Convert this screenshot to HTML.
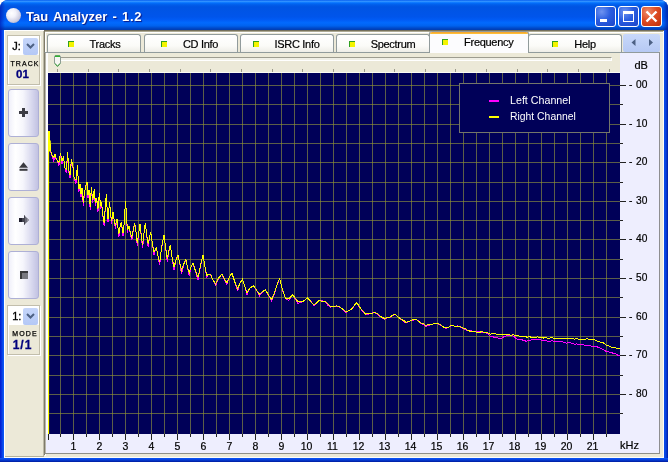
<!DOCTYPE html>
<html><head><meta charset="utf-8"><title>Tau Analyzer - 1.2</title>
<style>
html,body{margin:0;padding:0}
body{width:668px;height:462px;position:relative;overflow:hidden;background:#fff;font-family:"Liberation Sans",sans-serif;font-size:11px;color:#000}
div,span,i{box-sizing:border-box}
.abs,.tk,.lb,.tab,.stk,.btn,.grp{position:absolute}
#frame{will-change:transform;position:absolute;left:0;top:0;width:668px;height:462px;background:#0054e3;border-radius:8px 8px 0 0;overflow:hidden}
#title{position:absolute;left:0;top:0;width:668px;height:30px;background:linear-gradient(to bottom,#0058ee 0%,#3593ff 4%,#288eff 6%,#127dff 8%,#036ffc 10%,#0262ee 14%,#0057e5 20%,#0054e3 24%,#0055eb 56%,#005bf5 66%,#026afe 76%,#0062ef 86%,#0052d6 91%,#0046c4 95%,#003cb0 100%)}
#bl{position:absolute;left:0;top:30px;width:4px;height:432px;background:linear-gradient(to right,#001ad0,#0530dc 35%,#0a50f0 75%,#0c5cf8)}
#br{position:absolute;left:664px;top:30px;width:4px;height:432px;background:linear-gradient(to right,#0a4ce8,#0844e0 40%,#0230c4 75%,#001a9c)}
#bb{position:absolute;left:0;top:458px;width:668px;height:4px;background:linear-gradient(to bottom,#0c58f4,#0a48e8 30%,#0230c0 70%,#001a9c)}
#ttext{position:absolute;left:26px;top:9px;color:#fff;font-weight:bold;font-size:13px;line-height:16px;letter-spacing:0.05px;word-spacing:1.4px;text-shadow:1px 1px 1px #0a1883;white-space:nowrap}
#ticon{position:absolute;left:6.3px;top:7.7px;width:15px;height:15px;border-radius:50%;background:radial-gradient(circle at 38% 35%,#ffffff 0%,#f2f2fa 30%,#cfcfe2 62%,#9494b4 100%)}
.cb{position:absolute;top:6px;width:21px;height:21px;border:1px solid #fff;border-radius:3px;background:radial-gradient(circle at 30% 25%,#6e93f0 0%,#2a5de0 45%,#1a45c8 100%)}
.cb.x{background:radial-gradient(circle at 30% 25%,#ee8c6c 0%,#de4c24 45%,#bd2e0a 100%)}
#client{position:absolute;left:4px;top:30px;width:660px;height:428px;background:#ece9d8}
.tk{background:#222}
.lb{-webkit-text-stroke:0.2px #000;font-size:10.5px;line-height:13px;white-space:nowrap;color:#000}
.xc{width:21px;text-align:center}
.tab{top:34px;width:94px;height:19px;border:1px solid #919b9c;border-bottom:none;border-radius:3px 3px 0 0;background:linear-gradient(to bottom,#ffffff 0%,#fbfbf8 60%,#ecebe4 100%)}
.tab,.seltab{padding-right:2px;display:flex;justify-content:center;align-items:flex-start;white-space:nowrap}
.tab span,.seltab span{-webkit-text-stroke:0.2px #000;display:block;font-size:11px;line-height:13px;letter-spacing:-0.3px;margin-top:3px}
.seltab span{margin-top:3px}
.ic{display:block;flex:none;width:6px;height:6px;margin:6px 16px 0 0;background:#f4f400;border-top:1px solid #30a020;border-left:1px solid #30a020}
.stk{top:69px;width:1px;height:3px;background:#9c9a8a}
.btn{left:7.5px;width:31.5px;height:48px;border:1px solid #aeb0d6;border-radius:3px;background:linear-gradient(to right,#f0f0fa 0%,#ffffff 22%,#f6f6fc 48%,#d4d4ec 82%,#c2c2e2 100%)}
.grp{left:7px;width:33px;height:50px;border:1px solid #c2beac;box-shadow:inset 1px 1px 0 #fff, 1px 1px 0 #fff}
.combo{position:absolute;left:0px;top:0px;width:31px;height:19px;background:#fff}
.combo b{position:absolute;left:4.2px;top:4.3px;font-weight:normal;font-size:11px;line-height:13px;-webkit-text-stroke:0.35px #000}
.dd{position:absolute;left:15px;top:2px;width:15px;height:17px;background:linear-gradient(to bottom,#c6d6fa,#b4c8f6);border-radius:2px}
.sm{position:absolute;left:1px;width:31px;text-align:center;font-size:7px;line-height:7px;font-weight:normal;letter-spacing:1.1px;text-indent:1px;color:#000;-webkit-text-stroke:0.25px #000}
.big{position:absolute;left:0;width:31px;text-align:center;font-size:11.5px;line-height:12px;font-weight:bold;color:#00007c;-webkit-text-stroke:0.3px #00007c}
</style></head><body>
<div id="frame">
<div id="title"></div>
<div class="abs" style="left:0;top:0;width:5px;height:30px;background:linear-gradient(to right,rgba(0,20,170,0.65),rgba(0,30,190,0))"></div><div class="abs" style="left:663px;top:0;width:5px;height:30px;background:linear-gradient(to left,rgba(0,20,150,0.7),rgba(0,30,190,0))"></div><div id="bl"></div><div id="br"></div><div id="bb"></div>
<div id="ticon"></div>
<div id="ttext">Tau Analyzer - <span style="letter-spacing:0.7px">1.2</span></div>
<div class="cb" style="left:595px"><div class="abs" style="left:4px;top:12px;width:7px;height:3px;background:#fff"></div></div>
<div class="cb" style="left:618px"><div class="abs" style="left:4px;top:4px;width:11px;height:11px;border:1px solid #fff;border-top-width:3px"></div></div>
<div class="cb x" style="left:641px"><svg class="abs" style="left:0;top:0" width="19" height="19"><path d="M4.5 4.5 L14.5 14.5 M14.5 4.5 L4.5 14.5" stroke="#fff" stroke-width="2.4" fill="none"/></svg></div>

<div id="client"></div>

<!-- left panel -->
<div class="abs" style="left:4px;top:30px;width:40px;height:427px;background:#ece9d8;border-top:1px solid #fff;border-left:1px solid #fff"></div>
<div class="abs" style="left:43px;top:31px;width:1px;height:426px;background:#bcb9a6"></div>
<div class="abs" style="left:44px;top:30px;width:1px;height:425px;background:#7f7a68"></div>
<div class="abs" style="left:44px;top:30px;width:620px;height:1px;background:#746f5c"></div><div class="abs" style="left:45px;top:31px;width:619px;height:1px;background:#aeaa94"></div>
<div class="abs" style="left:4px;top:457px;width:660px;height:1px;background:#fdfdf8"></div><div class="abs" style="left:5px;top:456px;width:39px;height:1px;background:#b4b19c"></div><div class="abs" style="left:663px;top:31px;width:1px;height:427px;background:#fdfdf8"></div>

<div class="grp" style="top:35px">
  <div class="combo"><b>J:</b><div class="dd"><svg class="abs" style="left:3px;top:5px" width="9" height="7"><path d="M1 1 L4.5 4.5 L8 1" stroke="#4d6185" stroke-width="2" fill="none"/></svg></div></div>
  <div class="sm" style="top:24px">TRACK</div>
  <div class="big" style="top:32px;left:-1px">01</div>
</div>
<div class="btn" style="top:89px"><svg class="abs" style="left:9.4px;top:17px" width="11" height="11"><path d="M4 1h3v3h3v3h-3v3h-3v-3h-3v-3h3z" fill="#3c3c44"/></svg></div>
<div class="btn" style="top:143px"><svg class="abs" style="left:9.4px;top:17px" width="11" height="12"><path d="M5.5 1.2 L10 6.8 L1 6.8 Z" fill="#3a3a40"/><rect x="1.5" y="7.8" width="8" height="2" fill="#3a3a40"/></svg></div>
<div class="btn" style="top:197px"><svg class="abs" style="left:9px;top:16.3px" width="12" height="12"><path d="M1 4 h5 v-3 l5 5 l-5 5 v-3 h-5 z" fill="#6c6c78"/><path d="M1 4 h3.5 v4 h-3.5 z" fill="#1e1e2c"/><path d="M4.5 4 h1.5 v-3 l1 1 v8 l-1 1 v-3 h-1.5 z" fill="#44444f"/><path d="M9 4 l2 2 l-2 2 z" fill="#94949e"/></svg></div>
<div class="btn" style="top:251px"><div class="abs" style="left:11px;top:19px;width:8px;height:8px;background:#787880;border-top:2px solid #38383c;border-left:2px solid #38383c"></div></div>
<div class="grp" style="top:305px">
  <div class="combo"><b>1:</b><div class="dd"><svg class="abs" style="left:3px;top:5px" width="9" height="7"><path d="M1 1 L4.5 4.5 L8 1" stroke="#4d6185" stroke-width="2" fill="none"/></svg></div></div>
  <div class="sm" style="top:24px">MODE</div>
  <div class="big" style="top:32.5px;left:-1px;font-size:12px;letter-spacing:1px">1/1</div>
</div>

<!-- tab control -->
<div class="abs" style="left:45px;top:32px;width:618px;height:424px;background:#ece9d8;border-top:1px solid #fff;border-left:1px solid #fff"></div>
<div class="tab" style="left:47px;padding-right:0px"><i class="ic"></i><span>Tracks</span></div><div class="tab" style="left:143.5px;padding-right:2px"><i class="ic"></i><span>CD Info</span></div><div class="tab" style="left:240px;padding-right:2px"><i class="ic"></i><span>ISRC Info</span></div><div class="tab" style="left:336px;padding-right:2px"><i class="ic"></i><span>Spectrum</span></div><div class="tab" style="left:528px;padding-right:2px"><i class="ic"></i><span>Help</span></div>
<div class="abs" style="left:623px;top:34px;width:37px;height:18px;border-radius:2px;background:linear-gradient(to bottom,#c8d8fa,#b6c9f4)"></div>
<svg class="abs" style="left:623px;top:34px" width="37" height="18"><path d="M12.5 5 L12.5 12 L8.5 8.5 Z M26 5 L26 12 L30 8.5 Z" fill="#4d6185"/></svg>
<!-- page -->
<div class="abs" style="left:44px;top:52px;width:616px;height:402px;background:#fcfcfe;border:1px solid #919b9c;border-bottom-color:#8e8e88;border-right-color:#8e8e90;border-left-color:#7f7b6a;box-shadow:inset 1px 0 0 #b9b7ab"></div>
<!-- selected tab -->
<div class="abs seltab" style="left:429px;top:31px;width:99.5px;height:23px;background:#fcfcfe;border:1px solid #919b9c;border-bottom:none;border-radius:3px 3px 0 0;overflow:hidden"><div class="abs" style="left:-1px;top:-1px;width:100px;height:3px;background:linear-gradient(to bottom,#e68b2c 0%,#f6a830 50%,#ffc73c 100%)"></div><i class="ic" style="margin-top:7px"></i><span style="margin-top:4px">Frequency</span></div>

<!-- slider area -->
<div class="abs" style="left:48px;top:53px;width:572px;height:20px;background:#ece9d8;border-bottom:1px solid #fbfbf4"></div>
<div class="abs" style="left:58px;top:57px;width:554px;height:4px;border-top:1px solid #9d9c8f;border-left:1px solid #9d9c8f;border-bottom:1px solid #fff;border-right:1px solid #fff;background:#f0efe6"></div>
<svg class="abs" style="left:54px;top:55px" width="7" height="13"><path d="M0.5 2 Q0.5 0.5 2 0.5 L5 0.5 Q6.5 0.5 6.5 2 L6.5 8 L3.5 11.5 L0.5 8 Z" fill="#f6f6f2" stroke="#8c9c94" stroke-width="1"/><path d="M1 1.2 L6 1.2" stroke="#30b030" stroke-width="1.4"/><path d="M1 8.5 L3.5 11.3 L6 8.5" stroke="#30a030" stroke-width="1" fill="none"/></svg>
<div class="stk" style="left:57px"></div><div class="stk" style="left:88px"></div><div class="stk" style="left:118px"></div><div class="stk" style="left:149px"></div><div class="stk" style="left:180px"></div><div class="stk" style="left:210px"></div><div class="stk" style="left:241px"></div><div class="stk" style="left:272px"></div><div class="stk" style="left:302px"></div><div class="stk" style="left:333px"></div><div class="stk" style="left:364px"></div><div class="stk" style="left:394px"></div><div class="stk" style="left:425px"></div><div class="stk" style="left:455px"></div><div class="stk" style="left:486px"></div><div class="stk" style="left:517px"></div><div class="stk" style="left:547px"></div><div class="stk" style="left:578px"></div><div class="stk" style="left:609px"></div>

<!-- axis bg -->
<div class="abs" style="left:46px;top:434px;width:613px;height:19px;background:#eeeefe"></div>
<div class="abs" style="left:620px;top:53px;width:39px;height:400px;background:#eeeefe"></div>
<div class="lb" style="left:634.5px;top:59px;font-size:11px">dB</div>
<div class="lb" style="left:620px;top:439px;font-size:11px">kHz</div>
<div class="tk" style="left:620px;top:85px;width:6px;height:1px"></div><div class="lb" style="left:629px;top:77.7px;font-size:10.2px">-<span style="margin-left:3.6px">00</span></div><div class="tk" style="left:620px;top:104px;width:3px;height:1px"></div><div class="tk" style="left:620px;top:124px;width:6px;height:1px"></div><div class="lb" style="left:629px;top:116.7px;font-size:10.2px">-<span style="margin-left:3.6px">10</span></div><div class="tk" style="left:620px;top:143px;width:3px;height:1px"></div><div class="tk" style="left:620px;top:162px;width:6px;height:1px"></div><div class="lb" style="left:629px;top:154.7px;font-size:10.2px">-<span style="margin-left:3.6px">20</span></div><div class="tk" style="left:620px;top:182px;width:3px;height:1px"></div><div class="tk" style="left:620px;top:201px;width:6px;height:1px"></div><div class="lb" style="left:629px;top:193.7px;font-size:10.2px">-<span style="margin-left:3.6px">30</span></div><div class="tk" style="left:620px;top:220px;width:3px;height:1px"></div><div class="tk" style="left:620px;top:239px;width:6px;height:1px"></div><div class="lb" style="left:629px;top:231.7px;font-size:10.2px">-<span style="margin-left:3.6px">40</span></div><div class="tk" style="left:620px;top:259px;width:3px;height:1px"></div><div class="tk" style="left:620px;top:278px;width:6px;height:1px"></div><div class="lb" style="left:629px;top:270.7px;font-size:10.2px">-<span style="margin-left:3.6px">50</span></div><div class="tk" style="left:620px;top:297px;width:3px;height:1px"></div><div class="tk" style="left:620px;top:317px;width:6px;height:1px"></div><div class="lb" style="left:629px;top:309.7px;font-size:10.2px">-<span style="margin-left:3.6px">60</span></div><div class="tk" style="left:620px;top:336px;width:3px;height:1px"></div><div class="tk" style="left:620px;top:355px;width:6px;height:1px"></div><div class="lb" style="left:629px;top:347.7px;font-size:10.2px">-<span style="margin-left:3.6px">70</span></div><div class="tk" style="left:620px;top:375px;width:3px;height:1px"></div><div class="tk" style="left:620px;top:394px;width:6px;height:1px"></div><div class="lb" style="left:629px;top:386.7px;font-size:10.2px">-<span style="margin-left:3.6px">80</span></div><div class="tk" style="left:620px;top:413px;width:3px;height:1px"></div>
<div class="tk" style="left:48px;top:434px;width:1px;height:6px"></div><div class="tk" style="left:60px;top:434px;width:1px;height:3px"></div><div class="tk" style="left:73px;top:434px;width:1px;height:6px"></div><div class="lb xc" style="left:63px;top:440px">1</div><div class="tk" style="left:86px;top:434px;width:1px;height:3px"></div><div class="tk" style="left:99px;top:434px;width:1px;height:6px"></div><div class="lb xc" style="left:89px;top:440px">2</div><div class="tk" style="left:112px;top:434px;width:1px;height:3px"></div><div class="tk" style="left:125px;top:434px;width:1px;height:6px"></div><div class="lb xc" style="left:115px;top:440px">3</div><div class="tk" style="left:138px;top:434px;width:1px;height:3px"></div><div class="tk" style="left:151px;top:434px;width:1px;height:6px"></div><div class="lb xc" style="left:141px;top:440px">4</div><div class="tk" style="left:164px;top:434px;width:1px;height:3px"></div><div class="tk" style="left:177px;top:434px;width:1px;height:6px"></div><div class="lb xc" style="left:167px;top:440px">5</div><div class="tk" style="left:190px;top:434px;width:1px;height:3px"></div><div class="tk" style="left:203px;top:434px;width:1px;height:6px"></div><div class="lb xc" style="left:193px;top:440px">6</div><div class="tk" style="left:216px;top:434px;width:1px;height:3px"></div><div class="tk" style="left:229px;top:434px;width:1px;height:6px"></div><div class="lb xc" style="left:219px;top:440px">7</div><div class="tk" style="left:242px;top:434px;width:1px;height:3px"></div><div class="tk" style="left:255px;top:434px;width:1px;height:6px"></div><div class="lb xc" style="left:245px;top:440px">8</div><div class="tk" style="left:268px;top:434px;width:1px;height:3px"></div><div class="tk" style="left:281px;top:434px;width:1px;height:6px"></div><div class="lb xc" style="left:271px;top:440px">9</div><div class="tk" style="left:294px;top:434px;width:1px;height:3px"></div><div class="tk" style="left:307px;top:434px;width:1px;height:6px"></div><div class="lb xc" style="left:296px;top:440px">10</div><div class="tk" style="left:320px;top:434px;width:1px;height:3px"></div><div class="tk" style="left:333px;top:434px;width:1px;height:6px"></div><div class="lb xc" style="left:322px;top:440px">11</div><div class="tk" style="left:346px;top:434px;width:1px;height:3px"></div><div class="tk" style="left:359px;top:434px;width:1px;height:6px"></div><div class="lb xc" style="left:348px;top:440px">12</div><div class="tk" style="left:372px;top:434px;width:1px;height:3px"></div><div class="tk" style="left:385px;top:434px;width:1px;height:6px"></div><div class="lb xc" style="left:374px;top:440px">13</div><div class="tk" style="left:398px;top:434px;width:1px;height:3px"></div><div class="tk" style="left:411px;top:434px;width:1px;height:6px"></div><div class="lb xc" style="left:400px;top:440px">14</div><div class="tk" style="left:424px;top:434px;width:1px;height:3px"></div><div class="tk" style="left:437px;top:434px;width:1px;height:6px"></div><div class="lb xc" style="left:426px;top:440px">15</div><div class="tk" style="left:450px;top:434px;width:1px;height:3px"></div><div class="tk" style="left:463px;top:434px;width:1px;height:6px"></div><div class="lb xc" style="left:452px;top:440px">16</div><div class="tk" style="left:476px;top:434px;width:1px;height:3px"></div><div class="tk" style="left:489px;top:434px;width:1px;height:6px"></div><div class="lb xc" style="left:478px;top:440px">17</div><div class="tk" style="left:502px;top:434px;width:1px;height:3px"></div><div class="tk" style="left:515px;top:434px;width:1px;height:6px"></div><div class="lb xc" style="left:504px;top:440px">18</div><div class="tk" style="left:528px;top:434px;width:1px;height:3px"></div><div class="tk" style="left:541px;top:434px;width:1px;height:6px"></div><div class="lb xc" style="left:530px;top:440px">19</div><div class="tk" style="left:554px;top:434px;width:1px;height:3px"></div><div class="tk" style="left:567px;top:434px;width:1px;height:6px"></div><div class="lb xc" style="left:556px;top:440px">20</div><div class="tk" style="left:580px;top:434px;width:1px;height:3px"></div><div class="tk" style="left:593px;top:434px;width:1px;height:6px"></div><div class="lb xc" style="left:582px;top:440px">21</div><div class="tk" style="left:606px;top:434px;width:1px;height:3px"></div>

<!-- chart -->
<svg class="abs" style="left:48px;top:73px" width="572" height="361" viewBox="0 0 572 361">
<rect x="0" y="0" width="572" height="361" fill="#000058"/>
<g fill="#5c5e48" shape-rendering="crispEdges"><rect x="12" y="0" width="1" height="361"/><rect x="25" y="0" width="1" height="361"/><rect x="38" y="0" width="1" height="361"/><rect x="51" y="0" width="1" height="361"/><rect x="64" y="0" width="1" height="361"/><rect x="77" y="0" width="1" height="361"/><rect x="90" y="0" width="1" height="361"/><rect x="103" y="0" width="1" height="361"/><rect x="116" y="0" width="1" height="361"/><rect x="129" y="0" width="1" height="361"/><rect x="142" y="0" width="1" height="361"/><rect x="155" y="0" width="1" height="361"/><rect x="168" y="0" width="1" height="361"/><rect x="181" y="0" width="1" height="361"/><rect x="194" y="0" width="1" height="361"/><rect x="207" y="0" width="1" height="361"/><rect x="220" y="0" width="1" height="361"/><rect x="233" y="0" width="1" height="361"/><rect x="246" y="0" width="1" height="361"/><rect x="259" y="0" width="1" height="361"/><rect x="272" y="0" width="1" height="361"/><rect x="285" y="0" width="1" height="361"/><rect x="298" y="0" width="1" height="361"/><rect x="311" y="0" width="1" height="361"/><rect x="324" y="0" width="1" height="361"/><rect x="337" y="0" width="1" height="361"/><rect x="350" y="0" width="1" height="361"/><rect x="363" y="0" width="1" height="361"/><rect x="376" y="0" width="1" height="361"/><rect x="389" y="0" width="1" height="361"/><rect x="402" y="0" width="1" height="361"/><rect x="415" y="0" width="1" height="361"/><rect x="428" y="0" width="1" height="361"/><rect x="441" y="0" width="1" height="361"/><rect x="454" y="0" width="1" height="361"/><rect x="467" y="0" width="1" height="361"/><rect x="480" y="0" width="1" height="361"/><rect x="493" y="0" width="1" height="361"/><rect x="506" y="0" width="1" height="361"/><rect x="519" y="0" width="1" height="361"/><rect x="532" y="0" width="1" height="361"/><rect x="545" y="0" width="1" height="361"/><rect x="558" y="0" width="1" height="361"/><rect x="0" y="12" width="572" height="1"/><rect x="0" y="31" width="572" height="1"/><rect x="0" y="51" width="572" height="1"/><rect x="0" y="70" width="572" height="1"/><rect x="0" y="89" width="572" height="1"/><rect x="0" y="109" width="572" height="1"/><rect x="0" y="128" width="572" height="1"/><rect x="0" y="147" width="572" height="1"/><rect x="0" y="166" width="572" height="1"/><rect x="0" y="186" width="572" height="1"/><rect x="0" y="205" width="572" height="1"/><rect x="0" y="224" width="572" height="1"/><rect x="0" y="244" width="572" height="1"/><rect x="0" y="263" width="572" height="1"/><rect x="0" y="282" width="572" height="1"/><rect x="0" y="302" width="572" height="1"/><rect x="0" y="321" width="572" height="1"/><rect x="0" y="340" width="572" height="1"/></g>
<g fill="#848820" shape-rendering="crispEdges"><rect x="12" y="12" width="1" height="1"/><rect x="12" y="31" width="1" height="1"/><rect x="12" y="51" width="1" height="1"/><rect x="12" y="70" width="1" height="1"/><rect x="12" y="89" width="1" height="1"/><rect x="12" y="109" width="1" height="1"/><rect x="12" y="128" width="1" height="1"/><rect x="12" y="147" width="1" height="1"/><rect x="12" y="166" width="1" height="1"/><rect x="12" y="186" width="1" height="1"/><rect x="12" y="205" width="1" height="1"/><rect x="12" y="224" width="1" height="1"/><rect x="12" y="244" width="1" height="1"/><rect x="12" y="263" width="1" height="1"/><rect x="12" y="282" width="1" height="1"/><rect x="12" y="302" width="1" height="1"/><rect x="12" y="321" width="1" height="1"/><rect x="12" y="340" width="1" height="1"/><rect x="25" y="12" width="1" height="1"/><rect x="25" y="31" width="1" height="1"/><rect x="25" y="51" width="1" height="1"/><rect x="25" y="70" width="1" height="1"/><rect x="25" y="89" width="1" height="1"/><rect x="25" y="109" width="1" height="1"/><rect x="25" y="128" width="1" height="1"/><rect x="25" y="147" width="1" height="1"/><rect x="25" y="166" width="1" height="1"/><rect x="25" y="186" width="1" height="1"/><rect x="25" y="205" width="1" height="1"/><rect x="25" y="224" width="1" height="1"/><rect x="25" y="244" width="1" height="1"/><rect x="25" y="263" width="1" height="1"/><rect x="25" y="282" width="1" height="1"/><rect x="25" y="302" width="1" height="1"/><rect x="25" y="321" width="1" height="1"/><rect x="25" y="340" width="1" height="1"/><rect x="38" y="12" width="1" height="1"/><rect x="38" y="31" width="1" height="1"/><rect x="38" y="51" width="1" height="1"/><rect x="38" y="70" width="1" height="1"/><rect x="38" y="89" width="1" height="1"/><rect x="38" y="109" width="1" height="1"/><rect x="38" y="128" width="1" height="1"/><rect x="38" y="147" width="1" height="1"/><rect x="38" y="166" width="1" height="1"/><rect x="38" y="186" width="1" height="1"/><rect x="38" y="205" width="1" height="1"/><rect x="38" y="224" width="1" height="1"/><rect x="38" y="244" width="1" height="1"/><rect x="38" y="263" width="1" height="1"/><rect x="38" y="282" width="1" height="1"/><rect x="38" y="302" width="1" height="1"/><rect x="38" y="321" width="1" height="1"/><rect x="38" y="340" width="1" height="1"/><rect x="51" y="12" width="1" height="1"/><rect x="51" y="31" width="1" height="1"/><rect x="51" y="51" width="1" height="1"/><rect x="51" y="70" width="1" height="1"/><rect x="51" y="89" width="1" height="1"/><rect x="51" y="109" width="1" height="1"/><rect x="51" y="128" width="1" height="1"/><rect x="51" y="147" width="1" height="1"/><rect x="51" y="166" width="1" height="1"/><rect x="51" y="186" width="1" height="1"/><rect x="51" y="205" width="1" height="1"/><rect x="51" y="224" width="1" height="1"/><rect x="51" y="244" width="1" height="1"/><rect x="51" y="263" width="1" height="1"/><rect x="51" y="282" width="1" height="1"/><rect x="51" y="302" width="1" height="1"/><rect x="51" y="321" width="1" height="1"/><rect x="51" y="340" width="1" height="1"/><rect x="64" y="12" width="1" height="1"/><rect x="64" y="31" width="1" height="1"/><rect x="64" y="51" width="1" height="1"/><rect x="64" y="70" width="1" height="1"/><rect x="64" y="89" width="1" height="1"/><rect x="64" y="109" width="1" height="1"/><rect x="64" y="128" width="1" height="1"/><rect x="64" y="147" width="1" height="1"/><rect x="64" y="166" width="1" height="1"/><rect x="64" y="186" width="1" height="1"/><rect x="64" y="205" width="1" height="1"/><rect x="64" y="224" width="1" height="1"/><rect x="64" y="244" width="1" height="1"/><rect x="64" y="263" width="1" height="1"/><rect x="64" y="282" width="1" height="1"/><rect x="64" y="302" width="1" height="1"/><rect x="64" y="321" width="1" height="1"/><rect x="64" y="340" width="1" height="1"/><rect x="77" y="12" width="1" height="1"/><rect x="77" y="31" width="1" height="1"/><rect x="77" y="51" width="1" height="1"/><rect x="77" y="70" width="1" height="1"/><rect x="77" y="89" width="1" height="1"/><rect x="77" y="109" width="1" height="1"/><rect x="77" y="128" width="1" height="1"/><rect x="77" y="147" width="1" height="1"/><rect x="77" y="166" width="1" height="1"/><rect x="77" y="186" width="1" height="1"/><rect x="77" y="205" width="1" height="1"/><rect x="77" y="224" width="1" height="1"/><rect x="77" y="244" width="1" height="1"/><rect x="77" y="263" width="1" height="1"/><rect x="77" y="282" width="1" height="1"/><rect x="77" y="302" width="1" height="1"/><rect x="77" y="321" width="1" height="1"/><rect x="77" y="340" width="1" height="1"/><rect x="90" y="12" width="1" height="1"/><rect x="90" y="31" width="1" height="1"/><rect x="90" y="51" width="1" height="1"/><rect x="90" y="70" width="1" height="1"/><rect x="90" y="89" width="1" height="1"/><rect x="90" y="109" width="1" height="1"/><rect x="90" y="128" width="1" height="1"/><rect x="90" y="147" width="1" height="1"/><rect x="90" y="166" width="1" height="1"/><rect x="90" y="186" width="1" height="1"/><rect x="90" y="205" width="1" height="1"/><rect x="90" y="224" width="1" height="1"/><rect x="90" y="244" width="1" height="1"/><rect x="90" y="263" width="1" height="1"/><rect x="90" y="282" width="1" height="1"/><rect x="90" y="302" width="1" height="1"/><rect x="90" y="321" width="1" height="1"/><rect x="90" y="340" width="1" height="1"/><rect x="103" y="12" width="1" height="1"/><rect x="103" y="31" width="1" height="1"/><rect x="103" y="51" width="1" height="1"/><rect x="103" y="70" width="1" height="1"/><rect x="103" y="89" width="1" height="1"/><rect x="103" y="109" width="1" height="1"/><rect x="103" y="128" width="1" height="1"/><rect x="103" y="147" width="1" height="1"/><rect x="103" y="166" width="1" height="1"/><rect x="103" y="186" width="1" height="1"/><rect x="103" y="205" width="1" height="1"/><rect x="103" y="224" width="1" height="1"/><rect x="103" y="244" width="1" height="1"/><rect x="103" y="263" width="1" height="1"/><rect x="103" y="282" width="1" height="1"/><rect x="103" y="302" width="1" height="1"/><rect x="103" y="321" width="1" height="1"/><rect x="103" y="340" width="1" height="1"/><rect x="116" y="12" width="1" height="1"/><rect x="116" y="31" width="1" height="1"/><rect x="116" y="51" width="1" height="1"/><rect x="116" y="70" width="1" height="1"/><rect x="116" y="89" width="1" height="1"/><rect x="116" y="109" width="1" height="1"/><rect x="116" y="128" width="1" height="1"/><rect x="116" y="147" width="1" height="1"/><rect x="116" y="166" width="1" height="1"/><rect x="116" y="186" width="1" height="1"/><rect x="116" y="205" width="1" height="1"/><rect x="116" y="224" width="1" height="1"/><rect x="116" y="244" width="1" height="1"/><rect x="116" y="263" width="1" height="1"/><rect x="116" y="282" width="1" height="1"/><rect x="116" y="302" width="1" height="1"/><rect x="116" y="321" width="1" height="1"/><rect x="116" y="340" width="1" height="1"/><rect x="129" y="12" width="1" height="1"/><rect x="129" y="31" width="1" height="1"/><rect x="129" y="51" width="1" height="1"/><rect x="129" y="70" width="1" height="1"/><rect x="129" y="89" width="1" height="1"/><rect x="129" y="109" width="1" height="1"/><rect x="129" y="128" width="1" height="1"/><rect x="129" y="147" width="1" height="1"/><rect x="129" y="166" width="1" height="1"/><rect x="129" y="186" width="1" height="1"/><rect x="129" y="205" width="1" height="1"/><rect x="129" y="224" width="1" height="1"/><rect x="129" y="244" width="1" height="1"/><rect x="129" y="263" width="1" height="1"/><rect x="129" y="282" width="1" height="1"/><rect x="129" y="302" width="1" height="1"/><rect x="129" y="321" width="1" height="1"/><rect x="129" y="340" width="1" height="1"/><rect x="142" y="12" width="1" height="1"/><rect x="142" y="31" width="1" height="1"/><rect x="142" y="51" width="1" height="1"/><rect x="142" y="70" width="1" height="1"/><rect x="142" y="89" width="1" height="1"/><rect x="142" y="109" width="1" height="1"/><rect x="142" y="128" width="1" height="1"/><rect x="142" y="147" width="1" height="1"/><rect x="142" y="166" width="1" height="1"/><rect x="142" y="186" width="1" height="1"/><rect x="142" y="205" width="1" height="1"/><rect x="142" y="224" width="1" height="1"/><rect x="142" y="244" width="1" height="1"/><rect x="142" y="263" width="1" height="1"/><rect x="142" y="282" width="1" height="1"/><rect x="142" y="302" width="1" height="1"/><rect x="142" y="321" width="1" height="1"/><rect x="142" y="340" width="1" height="1"/><rect x="155" y="12" width="1" height="1"/><rect x="155" y="31" width="1" height="1"/><rect x="155" y="51" width="1" height="1"/><rect x="155" y="70" width="1" height="1"/><rect x="155" y="89" width="1" height="1"/><rect x="155" y="109" width="1" height="1"/><rect x="155" y="128" width="1" height="1"/><rect x="155" y="147" width="1" height="1"/><rect x="155" y="166" width="1" height="1"/><rect x="155" y="186" width="1" height="1"/><rect x="155" y="205" width="1" height="1"/><rect x="155" y="224" width="1" height="1"/><rect x="155" y="244" width="1" height="1"/><rect x="155" y="263" width="1" height="1"/><rect x="155" y="282" width="1" height="1"/><rect x="155" y="302" width="1" height="1"/><rect x="155" y="321" width="1" height="1"/><rect x="155" y="340" width="1" height="1"/><rect x="168" y="12" width="1" height="1"/><rect x="168" y="31" width="1" height="1"/><rect x="168" y="51" width="1" height="1"/><rect x="168" y="70" width="1" height="1"/><rect x="168" y="89" width="1" height="1"/><rect x="168" y="109" width="1" height="1"/><rect x="168" y="128" width="1" height="1"/><rect x="168" y="147" width="1" height="1"/><rect x="168" y="166" width="1" height="1"/><rect x="168" y="186" width="1" height="1"/><rect x="168" y="205" width="1" height="1"/><rect x="168" y="224" width="1" height="1"/><rect x="168" y="244" width="1" height="1"/><rect x="168" y="263" width="1" height="1"/><rect x="168" y="282" width="1" height="1"/><rect x="168" y="302" width="1" height="1"/><rect x="168" y="321" width="1" height="1"/><rect x="168" y="340" width="1" height="1"/><rect x="181" y="12" width="1" height="1"/><rect x="181" y="31" width="1" height="1"/><rect x="181" y="51" width="1" height="1"/><rect x="181" y="70" width="1" height="1"/><rect x="181" y="89" width="1" height="1"/><rect x="181" y="109" width="1" height="1"/><rect x="181" y="128" width="1" height="1"/><rect x="181" y="147" width="1" height="1"/><rect x="181" y="166" width="1" height="1"/><rect x="181" y="186" width="1" height="1"/><rect x="181" y="205" width="1" height="1"/><rect x="181" y="224" width="1" height="1"/><rect x="181" y="244" width="1" height="1"/><rect x="181" y="263" width="1" height="1"/><rect x="181" y="282" width="1" height="1"/><rect x="181" y="302" width="1" height="1"/><rect x="181" y="321" width="1" height="1"/><rect x="181" y="340" width="1" height="1"/><rect x="194" y="12" width="1" height="1"/><rect x="194" y="31" width="1" height="1"/><rect x="194" y="51" width="1" height="1"/><rect x="194" y="70" width="1" height="1"/><rect x="194" y="89" width="1" height="1"/><rect x="194" y="109" width="1" height="1"/><rect x="194" y="128" width="1" height="1"/><rect x="194" y="147" width="1" height="1"/><rect x="194" y="166" width="1" height="1"/><rect x="194" y="186" width="1" height="1"/><rect x="194" y="205" width="1" height="1"/><rect x="194" y="224" width="1" height="1"/><rect x="194" y="244" width="1" height="1"/><rect x="194" y="263" width="1" height="1"/><rect x="194" y="282" width="1" height="1"/><rect x="194" y="302" width="1" height="1"/><rect x="194" y="321" width="1" height="1"/><rect x="194" y="340" width="1" height="1"/><rect x="207" y="12" width="1" height="1"/><rect x="207" y="31" width="1" height="1"/><rect x="207" y="51" width="1" height="1"/><rect x="207" y="70" width="1" height="1"/><rect x="207" y="89" width="1" height="1"/><rect x="207" y="109" width="1" height="1"/><rect x="207" y="128" width="1" height="1"/><rect x="207" y="147" width="1" height="1"/><rect x="207" y="166" width="1" height="1"/><rect x="207" y="186" width="1" height="1"/><rect x="207" y="205" width="1" height="1"/><rect x="207" y="224" width="1" height="1"/><rect x="207" y="244" width="1" height="1"/><rect x="207" y="263" width="1" height="1"/><rect x="207" y="282" width="1" height="1"/><rect x="207" y="302" width="1" height="1"/><rect x="207" y="321" width="1" height="1"/><rect x="207" y="340" width="1" height="1"/><rect x="220" y="12" width="1" height="1"/><rect x="220" y="31" width="1" height="1"/><rect x="220" y="51" width="1" height="1"/><rect x="220" y="70" width="1" height="1"/><rect x="220" y="89" width="1" height="1"/><rect x="220" y="109" width="1" height="1"/><rect x="220" y="128" width="1" height="1"/><rect x="220" y="147" width="1" height="1"/><rect x="220" y="166" width="1" height="1"/><rect x="220" y="186" width="1" height="1"/><rect x="220" y="205" width="1" height="1"/><rect x="220" y="224" width="1" height="1"/><rect x="220" y="244" width="1" height="1"/><rect x="220" y="263" width="1" height="1"/><rect x="220" y="282" width="1" height="1"/><rect x="220" y="302" width="1" height="1"/><rect x="220" y="321" width="1" height="1"/><rect x="220" y="340" width="1" height="1"/><rect x="233" y="12" width="1" height="1"/><rect x="233" y="31" width="1" height="1"/><rect x="233" y="51" width="1" height="1"/><rect x="233" y="70" width="1" height="1"/><rect x="233" y="89" width="1" height="1"/><rect x="233" y="109" width="1" height="1"/><rect x="233" y="128" width="1" height="1"/><rect x="233" y="147" width="1" height="1"/><rect x="233" y="166" width="1" height="1"/><rect x="233" y="186" width="1" height="1"/><rect x="233" y="205" width="1" height="1"/><rect x="233" y="224" width="1" height="1"/><rect x="233" y="244" width="1" height="1"/><rect x="233" y="263" width="1" height="1"/><rect x="233" y="282" width="1" height="1"/><rect x="233" y="302" width="1" height="1"/><rect x="233" y="321" width="1" height="1"/><rect x="233" y="340" width="1" height="1"/><rect x="246" y="12" width="1" height="1"/><rect x="246" y="31" width="1" height="1"/><rect x="246" y="51" width="1" height="1"/><rect x="246" y="70" width="1" height="1"/><rect x="246" y="89" width="1" height="1"/><rect x="246" y="109" width="1" height="1"/><rect x="246" y="128" width="1" height="1"/><rect x="246" y="147" width="1" height="1"/><rect x="246" y="166" width="1" height="1"/><rect x="246" y="186" width="1" height="1"/><rect x="246" y="205" width="1" height="1"/><rect x="246" y="224" width="1" height="1"/><rect x="246" y="244" width="1" height="1"/><rect x="246" y="263" width="1" height="1"/><rect x="246" y="282" width="1" height="1"/><rect x="246" y="302" width="1" height="1"/><rect x="246" y="321" width="1" height="1"/><rect x="246" y="340" width="1" height="1"/><rect x="259" y="12" width="1" height="1"/><rect x="259" y="31" width="1" height="1"/><rect x="259" y="51" width="1" height="1"/><rect x="259" y="70" width="1" height="1"/><rect x="259" y="89" width="1" height="1"/><rect x="259" y="109" width="1" height="1"/><rect x="259" y="128" width="1" height="1"/><rect x="259" y="147" width="1" height="1"/><rect x="259" y="166" width="1" height="1"/><rect x="259" y="186" width="1" height="1"/><rect x="259" y="205" width="1" height="1"/><rect x="259" y="224" width="1" height="1"/><rect x="259" y="244" width="1" height="1"/><rect x="259" y="263" width="1" height="1"/><rect x="259" y="282" width="1" height="1"/><rect x="259" y="302" width="1" height="1"/><rect x="259" y="321" width="1" height="1"/><rect x="259" y="340" width="1" height="1"/><rect x="272" y="12" width="1" height="1"/><rect x="272" y="31" width="1" height="1"/><rect x="272" y="51" width="1" height="1"/><rect x="272" y="70" width="1" height="1"/><rect x="272" y="89" width="1" height="1"/><rect x="272" y="109" width="1" height="1"/><rect x="272" y="128" width="1" height="1"/><rect x="272" y="147" width="1" height="1"/><rect x="272" y="166" width="1" height="1"/><rect x="272" y="186" width="1" height="1"/><rect x="272" y="205" width="1" height="1"/><rect x="272" y="224" width="1" height="1"/><rect x="272" y="244" width="1" height="1"/><rect x="272" y="263" width="1" height="1"/><rect x="272" y="282" width="1" height="1"/><rect x="272" y="302" width="1" height="1"/><rect x="272" y="321" width="1" height="1"/><rect x="272" y="340" width="1" height="1"/><rect x="285" y="12" width="1" height="1"/><rect x="285" y="31" width="1" height="1"/><rect x="285" y="51" width="1" height="1"/><rect x="285" y="70" width="1" height="1"/><rect x="285" y="89" width="1" height="1"/><rect x="285" y="109" width="1" height="1"/><rect x="285" y="128" width="1" height="1"/><rect x="285" y="147" width="1" height="1"/><rect x="285" y="166" width="1" height="1"/><rect x="285" y="186" width="1" height="1"/><rect x="285" y="205" width="1" height="1"/><rect x="285" y="224" width="1" height="1"/><rect x="285" y="244" width="1" height="1"/><rect x="285" y="263" width="1" height="1"/><rect x="285" y="282" width="1" height="1"/><rect x="285" y="302" width="1" height="1"/><rect x="285" y="321" width="1" height="1"/><rect x="285" y="340" width="1" height="1"/><rect x="298" y="12" width="1" height="1"/><rect x="298" y="31" width="1" height="1"/><rect x="298" y="51" width="1" height="1"/><rect x="298" y="70" width="1" height="1"/><rect x="298" y="89" width="1" height="1"/><rect x="298" y="109" width="1" height="1"/><rect x="298" y="128" width="1" height="1"/><rect x="298" y="147" width="1" height="1"/><rect x="298" y="166" width="1" height="1"/><rect x="298" y="186" width="1" height="1"/><rect x="298" y="205" width="1" height="1"/><rect x="298" y="224" width="1" height="1"/><rect x="298" y="244" width="1" height="1"/><rect x="298" y="263" width="1" height="1"/><rect x="298" y="282" width="1" height="1"/><rect x="298" y="302" width="1" height="1"/><rect x="298" y="321" width="1" height="1"/><rect x="298" y="340" width="1" height="1"/><rect x="311" y="12" width="1" height="1"/><rect x="311" y="31" width="1" height="1"/><rect x="311" y="51" width="1" height="1"/><rect x="311" y="70" width="1" height="1"/><rect x="311" y="89" width="1" height="1"/><rect x="311" y="109" width="1" height="1"/><rect x="311" y="128" width="1" height="1"/><rect x="311" y="147" width="1" height="1"/><rect x="311" y="166" width="1" height="1"/><rect x="311" y="186" width="1" height="1"/><rect x="311" y="205" width="1" height="1"/><rect x="311" y="224" width="1" height="1"/><rect x="311" y="244" width="1" height="1"/><rect x="311" y="263" width="1" height="1"/><rect x="311" y="282" width="1" height="1"/><rect x="311" y="302" width="1" height="1"/><rect x="311" y="321" width="1" height="1"/><rect x="311" y="340" width="1" height="1"/><rect x="324" y="12" width="1" height="1"/><rect x="324" y="31" width="1" height="1"/><rect x="324" y="51" width="1" height="1"/><rect x="324" y="70" width="1" height="1"/><rect x="324" y="89" width="1" height="1"/><rect x="324" y="109" width="1" height="1"/><rect x="324" y="128" width="1" height="1"/><rect x="324" y="147" width="1" height="1"/><rect x="324" y="166" width="1" height="1"/><rect x="324" y="186" width="1" height="1"/><rect x="324" y="205" width="1" height="1"/><rect x="324" y="224" width="1" height="1"/><rect x="324" y="244" width="1" height="1"/><rect x="324" y="263" width="1" height="1"/><rect x="324" y="282" width="1" height="1"/><rect x="324" y="302" width="1" height="1"/><rect x="324" y="321" width="1" height="1"/><rect x="324" y="340" width="1" height="1"/><rect x="337" y="12" width="1" height="1"/><rect x="337" y="31" width="1" height="1"/><rect x="337" y="51" width="1" height="1"/><rect x="337" y="70" width="1" height="1"/><rect x="337" y="89" width="1" height="1"/><rect x="337" y="109" width="1" height="1"/><rect x="337" y="128" width="1" height="1"/><rect x="337" y="147" width="1" height="1"/><rect x="337" y="166" width="1" height="1"/><rect x="337" y="186" width="1" height="1"/><rect x="337" y="205" width="1" height="1"/><rect x="337" y="224" width="1" height="1"/><rect x="337" y="244" width="1" height="1"/><rect x="337" y="263" width="1" height="1"/><rect x="337" y="282" width="1" height="1"/><rect x="337" y="302" width="1" height="1"/><rect x="337" y="321" width="1" height="1"/><rect x="337" y="340" width="1" height="1"/><rect x="350" y="12" width="1" height="1"/><rect x="350" y="31" width="1" height="1"/><rect x="350" y="51" width="1" height="1"/><rect x="350" y="70" width="1" height="1"/><rect x="350" y="89" width="1" height="1"/><rect x="350" y="109" width="1" height="1"/><rect x="350" y="128" width="1" height="1"/><rect x="350" y="147" width="1" height="1"/><rect x="350" y="166" width="1" height="1"/><rect x="350" y="186" width="1" height="1"/><rect x="350" y="205" width="1" height="1"/><rect x="350" y="224" width="1" height="1"/><rect x="350" y="244" width="1" height="1"/><rect x="350" y="263" width="1" height="1"/><rect x="350" y="282" width="1" height="1"/><rect x="350" y="302" width="1" height="1"/><rect x="350" y="321" width="1" height="1"/><rect x="350" y="340" width="1" height="1"/><rect x="363" y="12" width="1" height="1"/><rect x="363" y="31" width="1" height="1"/><rect x="363" y="51" width="1" height="1"/><rect x="363" y="70" width="1" height="1"/><rect x="363" y="89" width="1" height="1"/><rect x="363" y="109" width="1" height="1"/><rect x="363" y="128" width="1" height="1"/><rect x="363" y="147" width="1" height="1"/><rect x="363" y="166" width="1" height="1"/><rect x="363" y="186" width="1" height="1"/><rect x="363" y="205" width="1" height="1"/><rect x="363" y="224" width="1" height="1"/><rect x="363" y="244" width="1" height="1"/><rect x="363" y="263" width="1" height="1"/><rect x="363" y="282" width="1" height="1"/><rect x="363" y="302" width="1" height="1"/><rect x="363" y="321" width="1" height="1"/><rect x="363" y="340" width="1" height="1"/><rect x="376" y="12" width="1" height="1"/><rect x="376" y="31" width="1" height="1"/><rect x="376" y="51" width="1" height="1"/><rect x="376" y="70" width="1" height="1"/><rect x="376" y="89" width="1" height="1"/><rect x="376" y="109" width="1" height="1"/><rect x="376" y="128" width="1" height="1"/><rect x="376" y="147" width="1" height="1"/><rect x="376" y="166" width="1" height="1"/><rect x="376" y="186" width="1" height="1"/><rect x="376" y="205" width="1" height="1"/><rect x="376" y="224" width="1" height="1"/><rect x="376" y="244" width="1" height="1"/><rect x="376" y="263" width="1" height="1"/><rect x="376" y="282" width="1" height="1"/><rect x="376" y="302" width="1" height="1"/><rect x="376" y="321" width="1" height="1"/><rect x="376" y="340" width="1" height="1"/><rect x="389" y="12" width="1" height="1"/><rect x="389" y="31" width="1" height="1"/><rect x="389" y="51" width="1" height="1"/><rect x="389" y="70" width="1" height="1"/><rect x="389" y="89" width="1" height="1"/><rect x="389" y="109" width="1" height="1"/><rect x="389" y="128" width="1" height="1"/><rect x="389" y="147" width="1" height="1"/><rect x="389" y="166" width="1" height="1"/><rect x="389" y="186" width="1" height="1"/><rect x="389" y="205" width="1" height="1"/><rect x="389" y="224" width="1" height="1"/><rect x="389" y="244" width="1" height="1"/><rect x="389" y="263" width="1" height="1"/><rect x="389" y="282" width="1" height="1"/><rect x="389" y="302" width="1" height="1"/><rect x="389" y="321" width="1" height="1"/><rect x="389" y="340" width="1" height="1"/><rect x="402" y="12" width="1" height="1"/><rect x="402" y="31" width="1" height="1"/><rect x="402" y="51" width="1" height="1"/><rect x="402" y="70" width="1" height="1"/><rect x="402" y="89" width="1" height="1"/><rect x="402" y="109" width="1" height="1"/><rect x="402" y="128" width="1" height="1"/><rect x="402" y="147" width="1" height="1"/><rect x="402" y="166" width="1" height="1"/><rect x="402" y="186" width="1" height="1"/><rect x="402" y="205" width="1" height="1"/><rect x="402" y="224" width="1" height="1"/><rect x="402" y="244" width="1" height="1"/><rect x="402" y="263" width="1" height="1"/><rect x="402" y="282" width="1" height="1"/><rect x="402" y="302" width="1" height="1"/><rect x="402" y="321" width="1" height="1"/><rect x="402" y="340" width="1" height="1"/><rect x="415" y="12" width="1" height="1"/><rect x="415" y="31" width="1" height="1"/><rect x="415" y="51" width="1" height="1"/><rect x="415" y="70" width="1" height="1"/><rect x="415" y="89" width="1" height="1"/><rect x="415" y="109" width="1" height="1"/><rect x="415" y="128" width="1" height="1"/><rect x="415" y="147" width="1" height="1"/><rect x="415" y="166" width="1" height="1"/><rect x="415" y="186" width="1" height="1"/><rect x="415" y="205" width="1" height="1"/><rect x="415" y="224" width="1" height="1"/><rect x="415" y="244" width="1" height="1"/><rect x="415" y="263" width="1" height="1"/><rect x="415" y="282" width="1" height="1"/><rect x="415" y="302" width="1" height="1"/><rect x="415" y="321" width="1" height="1"/><rect x="415" y="340" width="1" height="1"/><rect x="428" y="12" width="1" height="1"/><rect x="428" y="31" width="1" height="1"/><rect x="428" y="51" width="1" height="1"/><rect x="428" y="70" width="1" height="1"/><rect x="428" y="89" width="1" height="1"/><rect x="428" y="109" width="1" height="1"/><rect x="428" y="128" width="1" height="1"/><rect x="428" y="147" width="1" height="1"/><rect x="428" y="166" width="1" height="1"/><rect x="428" y="186" width="1" height="1"/><rect x="428" y="205" width="1" height="1"/><rect x="428" y="224" width="1" height="1"/><rect x="428" y="244" width="1" height="1"/><rect x="428" y="263" width="1" height="1"/><rect x="428" y="282" width="1" height="1"/><rect x="428" y="302" width="1" height="1"/><rect x="428" y="321" width="1" height="1"/><rect x="428" y="340" width="1" height="1"/><rect x="441" y="12" width="1" height="1"/><rect x="441" y="31" width="1" height="1"/><rect x="441" y="51" width="1" height="1"/><rect x="441" y="70" width="1" height="1"/><rect x="441" y="89" width="1" height="1"/><rect x="441" y="109" width="1" height="1"/><rect x="441" y="128" width="1" height="1"/><rect x="441" y="147" width="1" height="1"/><rect x="441" y="166" width="1" height="1"/><rect x="441" y="186" width="1" height="1"/><rect x="441" y="205" width="1" height="1"/><rect x="441" y="224" width="1" height="1"/><rect x="441" y="244" width="1" height="1"/><rect x="441" y="263" width="1" height="1"/><rect x="441" y="282" width="1" height="1"/><rect x="441" y="302" width="1" height="1"/><rect x="441" y="321" width="1" height="1"/><rect x="441" y="340" width="1" height="1"/><rect x="454" y="12" width="1" height="1"/><rect x="454" y="31" width="1" height="1"/><rect x="454" y="51" width="1" height="1"/><rect x="454" y="70" width="1" height="1"/><rect x="454" y="89" width="1" height="1"/><rect x="454" y="109" width="1" height="1"/><rect x="454" y="128" width="1" height="1"/><rect x="454" y="147" width="1" height="1"/><rect x="454" y="166" width="1" height="1"/><rect x="454" y="186" width="1" height="1"/><rect x="454" y="205" width="1" height="1"/><rect x="454" y="224" width="1" height="1"/><rect x="454" y="244" width="1" height="1"/><rect x="454" y="263" width="1" height="1"/><rect x="454" y="282" width="1" height="1"/><rect x="454" y="302" width="1" height="1"/><rect x="454" y="321" width="1" height="1"/><rect x="454" y="340" width="1" height="1"/><rect x="467" y="12" width="1" height="1"/><rect x="467" y="31" width="1" height="1"/><rect x="467" y="51" width="1" height="1"/><rect x="467" y="70" width="1" height="1"/><rect x="467" y="89" width="1" height="1"/><rect x="467" y="109" width="1" height="1"/><rect x="467" y="128" width="1" height="1"/><rect x="467" y="147" width="1" height="1"/><rect x="467" y="166" width="1" height="1"/><rect x="467" y="186" width="1" height="1"/><rect x="467" y="205" width="1" height="1"/><rect x="467" y="224" width="1" height="1"/><rect x="467" y="244" width="1" height="1"/><rect x="467" y="263" width="1" height="1"/><rect x="467" y="282" width="1" height="1"/><rect x="467" y="302" width="1" height="1"/><rect x="467" y="321" width="1" height="1"/><rect x="467" y="340" width="1" height="1"/><rect x="480" y="12" width="1" height="1"/><rect x="480" y="31" width="1" height="1"/><rect x="480" y="51" width="1" height="1"/><rect x="480" y="70" width="1" height="1"/><rect x="480" y="89" width="1" height="1"/><rect x="480" y="109" width="1" height="1"/><rect x="480" y="128" width="1" height="1"/><rect x="480" y="147" width="1" height="1"/><rect x="480" y="166" width="1" height="1"/><rect x="480" y="186" width="1" height="1"/><rect x="480" y="205" width="1" height="1"/><rect x="480" y="224" width="1" height="1"/><rect x="480" y="244" width="1" height="1"/><rect x="480" y="263" width="1" height="1"/><rect x="480" y="282" width="1" height="1"/><rect x="480" y="302" width="1" height="1"/><rect x="480" y="321" width="1" height="1"/><rect x="480" y="340" width="1" height="1"/><rect x="493" y="12" width="1" height="1"/><rect x="493" y="31" width="1" height="1"/><rect x="493" y="51" width="1" height="1"/><rect x="493" y="70" width="1" height="1"/><rect x="493" y="89" width="1" height="1"/><rect x="493" y="109" width="1" height="1"/><rect x="493" y="128" width="1" height="1"/><rect x="493" y="147" width="1" height="1"/><rect x="493" y="166" width="1" height="1"/><rect x="493" y="186" width="1" height="1"/><rect x="493" y="205" width="1" height="1"/><rect x="493" y="224" width="1" height="1"/><rect x="493" y="244" width="1" height="1"/><rect x="493" y="263" width="1" height="1"/><rect x="493" y="282" width="1" height="1"/><rect x="493" y="302" width="1" height="1"/><rect x="493" y="321" width="1" height="1"/><rect x="493" y="340" width="1" height="1"/><rect x="506" y="12" width="1" height="1"/><rect x="506" y="31" width="1" height="1"/><rect x="506" y="51" width="1" height="1"/><rect x="506" y="70" width="1" height="1"/><rect x="506" y="89" width="1" height="1"/><rect x="506" y="109" width="1" height="1"/><rect x="506" y="128" width="1" height="1"/><rect x="506" y="147" width="1" height="1"/><rect x="506" y="166" width="1" height="1"/><rect x="506" y="186" width="1" height="1"/><rect x="506" y="205" width="1" height="1"/><rect x="506" y="224" width="1" height="1"/><rect x="506" y="244" width="1" height="1"/><rect x="506" y="263" width="1" height="1"/><rect x="506" y="282" width="1" height="1"/><rect x="506" y="302" width="1" height="1"/><rect x="506" y="321" width="1" height="1"/><rect x="506" y="340" width="1" height="1"/><rect x="519" y="12" width="1" height="1"/><rect x="519" y="31" width="1" height="1"/><rect x="519" y="51" width="1" height="1"/><rect x="519" y="70" width="1" height="1"/><rect x="519" y="89" width="1" height="1"/><rect x="519" y="109" width="1" height="1"/><rect x="519" y="128" width="1" height="1"/><rect x="519" y="147" width="1" height="1"/><rect x="519" y="166" width="1" height="1"/><rect x="519" y="186" width="1" height="1"/><rect x="519" y="205" width="1" height="1"/><rect x="519" y="224" width="1" height="1"/><rect x="519" y="244" width="1" height="1"/><rect x="519" y="263" width="1" height="1"/><rect x="519" y="282" width="1" height="1"/><rect x="519" y="302" width="1" height="1"/><rect x="519" y="321" width="1" height="1"/><rect x="519" y="340" width="1" height="1"/><rect x="532" y="12" width="1" height="1"/><rect x="532" y="31" width="1" height="1"/><rect x="532" y="51" width="1" height="1"/><rect x="532" y="70" width="1" height="1"/><rect x="532" y="89" width="1" height="1"/><rect x="532" y="109" width="1" height="1"/><rect x="532" y="128" width="1" height="1"/><rect x="532" y="147" width="1" height="1"/><rect x="532" y="166" width="1" height="1"/><rect x="532" y="186" width="1" height="1"/><rect x="532" y="205" width="1" height="1"/><rect x="532" y="224" width="1" height="1"/><rect x="532" y="244" width="1" height="1"/><rect x="532" y="263" width="1" height="1"/><rect x="532" y="282" width="1" height="1"/><rect x="532" y="302" width="1" height="1"/><rect x="532" y="321" width="1" height="1"/><rect x="532" y="340" width="1" height="1"/><rect x="545" y="12" width="1" height="1"/><rect x="545" y="31" width="1" height="1"/><rect x="545" y="51" width="1" height="1"/><rect x="545" y="70" width="1" height="1"/><rect x="545" y="89" width="1" height="1"/><rect x="545" y="109" width="1" height="1"/><rect x="545" y="128" width="1" height="1"/><rect x="545" y="147" width="1" height="1"/><rect x="545" y="166" width="1" height="1"/><rect x="545" y="186" width="1" height="1"/><rect x="545" y="205" width="1" height="1"/><rect x="545" y="224" width="1" height="1"/><rect x="545" y="244" width="1" height="1"/><rect x="545" y="263" width="1" height="1"/><rect x="545" y="282" width="1" height="1"/><rect x="545" y="302" width="1" height="1"/><rect x="545" y="321" width="1" height="1"/><rect x="545" y="340" width="1" height="1"/><rect x="558" y="12" width="1" height="1"/><rect x="558" y="31" width="1" height="1"/><rect x="558" y="51" width="1" height="1"/><rect x="558" y="70" width="1" height="1"/><rect x="558" y="89" width="1" height="1"/><rect x="558" y="109" width="1" height="1"/><rect x="558" y="128" width="1" height="1"/><rect x="558" y="147" width="1" height="1"/><rect x="558" y="166" width="1" height="1"/><rect x="558" y="186" width="1" height="1"/><rect x="558" y="205" width="1" height="1"/><rect x="558" y="224" width="1" height="1"/><rect x="558" y="244" width="1" height="1"/><rect x="558" y="263" width="1" height="1"/><rect x="558" y="282" width="1" height="1"/><rect x="558" y="302" width="1" height="1"/><rect x="558" y="321" width="1" height="1"/><rect x="558" y="340" width="1" height="1"/></g>
<polyline points="1.0,58.3 1.5,67.3 2.3,73.3 2.8,78.8 3.8,81.9 5.8,87.9 7.0,81.5 8.1,85.8 9.7,88.5 10.9,92.6 12.4,80.7 14.0,91.0 15.5,84.6 17.1,95.9 18.4,99.6 19.7,79.5 20.6,97.4 22.1,105.0 23.5,86.2 24.9,93.6 26.0,104.3 28.0,110.5 29.5,92.3 30.3,109.3 30.9,119.2 32.0,111.3 33.0,124.2 34.0,115.3 35.3,133.2 36.5,119.3 37.8,113.3 39.0,109.3 40.0,125.2 41.0,117.3 42.2,137.2 43.4,114.3 44.6,130.2 45.4,123.3 46.2,116.3 47.4,133.2 48.6,125.3 49.9,139.2 50.7,127.3 51.5,120.3 52.5,136.2 53.5,129.3 54.8,142.3 56.2,153.2 57.2,135.3 58.3,121.3 59.2,137.3 60.0,149.2 60.8,137.3 61.6,129.3 62.6,141.3 63.7,151.2 65.0,139.3 66.2,147.3 67.5,156.2 68.3,149.3 69.1,146.3 70.0,155.3 70.9,164.2 72.0,154.3 73.2,149.3 74.1,155.3 75.0,163.2 76.0,152.3 76.8,139.3 77.6,128.3 78.4,142.3 79.4,160.2 80.2,155.3 81.0,153.3 82.3,160.3 83.8,167.2 85.2,157.3 86.7,150.3 88.0,159.3 89.3,173.2 90.8,159.3 92.0,151.3 93.3,163.3 94.6,175.2 96.0,160.3 97.3,150.3 98.8,163.3 100.2,174.2 101.5,164.3 102.8,159.3 104.3,170.3 106.0,182.2 107.3,176.3 108.5,175.3 110.0,183.3 111.7,192.2 113.0,179.3 114.5,169.3 116.0,162.3 117.5,174.3 119.3,189.2 120.8,178.3 122.3,172.3 124.0,184.3 126.0,197.2 128.0,187.3 129.9,182.3 131.7,190.3 133.6,200.7 135.8,191.3 137.9,186.3 139.5,194.3 141.2,203.2 143.0,194.3 144.9,190.3 147.5,198.3 150.0,207.2 151.7,197.3 153.3,189.2 155.0,182.2 156.5,191.2 158.8,204.0 160.6,201.2 162.5,201.2 165.0,207.2 167.6,212.5 170.7,205.2 173.9,201.2 176.4,206.2 178.9,211.5 181.4,204.2 183.9,200.2 186.8,209.2 189.7,217.5 192.0,210.2 194.5,206.2 196.7,213.2 199.0,221.5 202.0,215.2 205.3,212.8 208.5,217.2 211.6,222.9 214.5,218.7 217.4,217.2 220.5,222.2 223.7,227.9 226.5,220.2 229.3,211.2 231.7,205.7 233.0,211.2 234.5,217.2 237.5,225.2 240.8,227.5 244.6,222.0 250.1,230.5 254.6,228.8 257.1,226.9 259.7,225.0 261.8,227.4 263.9,229.6 266.0,232.6 268.5,230.5 271.0,227.5 273.1,227.3 275.2,228.4 277.3,228.8 279.8,232.1 282.3,234.4 284.4,233.4 286.5,233.5 288.6,233.0 292.4,234.5 295.1,237.1 297.9,239.4 300.8,237.3 303.7,236.3 306.2,233.0 308.7,230.0 310.9,233.4 313.0,236.3 315.2,239.0 317.5,241.9 320.0,241.5 322.5,240.6 324.8,239.7 327.0,239.6 329.8,241.4 332.6,243.8 336.4,246.2 338.9,244.9 341.4,244.6 344.3,243.0 347.2,241.3 349.4,243.7 351.5,245.1 353.6,246.8 355.7,248.7 357.8,250.0 360.3,248.7 362.8,247.6 365.3,247.3 367.8,246.4 370.3,247.8 372.8,250.1 375.4,251.4 377.9,253.3 380.4,252.6 382.9,251.4 385.4,251.0 387.9,250.1 390.0,251.0 392.1,251.7 394.2,253.2 396.2,254.1 398.3,255.6 400.4,254.2 402.5,253.3 404.6,252.5 407.1,253.3 409.6,252.9 412.1,253.7 414.6,255.4 417.2,256.7 419.7,257.5 422.2,257.4 424.7,258.2 427.2,258.8 429.2,258.9 431.2,258.5 433.3,259.1 435.3,259.8 437.3,259.5 439.8,260.5 442.3,263.6 444.3,263.5 446.3,264.4 448.4,264.2 450.4,265.1 452.4,265.4 454.5,265.0 456.5,263.3 458.6,262.8 460.7,262.2 462.8,262.3 464.9,262.8 467.5,264.9 470.0,266.9 472.0,266.5 474.0,266.8 476.0,267.5 478.0,268.2 480.0,267.9 482.5,267.2 485.1,266.6 487.6,266.1 489.6,266.6 491.6,266.3 493.6,267.3 495.6,267.1 497.6,267.9 499.7,268.1 501.8,268.7 503.9,267.7 506.0,268.4 508.1,268.6 510.2,268.6 512.3,268.4 514.4,268.8 516.5,269.8 518.6,270.1 520.7,269.2 522.8,269.9 524.8,270.5 526.8,271.2 528.8,270.8 530.8,271.6 532.8,271.9 534.8,271.6 536.8,272.1 538.9,272.7 540.9,272.8 542.9,272.9 545.4,273.7 548.0,273.4 550.5,274.4 553.0,275.5 555.5,276.9 557.8,278.2 560.0,278.7 562.0,279.4 564.0,279.8 566.0,280.5 568.0,281.0 570.0,282.4 572.0,282.5" fill="none" stroke="#ff00ff" stroke-width="1" stroke-linejoin="miter" shape-rendering="crispEdges"/>
<polyline points="1.0,58.0 1.5,67.0 2.3,73.0 2.8,78.5 3.8,81.6 5.8,84.7 7.0,81.2 8.1,85.5 9.7,88.2 10.9,89.4 12.4,80.4 14.0,87.8 15.5,84.3 17.1,95.6 18.4,96.4 19.7,79.2 20.6,97.1 22.1,101.8 23.5,85.9 24.9,93.3 26.0,104.0 28.0,107.3 29.5,92.0 30.3,109.0 30.9,116.0 32.0,111.0 33.0,121.0 34.0,115.0 35.3,130.0 36.5,119.0 37.8,113.0 39.0,109.0 40.0,122.0 41.0,117.0 42.2,134.0 43.4,114.0 44.6,127.0 45.4,123.0 46.2,116.0 47.4,130.0 48.6,125.0 49.9,136.0 50.7,127.0 51.5,120.0 52.5,133.0 53.5,129.0 54.8,142.0 56.2,150.0 57.2,135.0 58.3,121.0 59.2,137.0 60.0,146.0 60.8,137.0 61.6,129.0 62.6,141.0 63.7,148.0 65.0,139.0 66.2,147.0 67.5,153.0 68.3,149.0 69.1,146.0 70.0,155.0 70.9,161.0 72.0,154.0 73.2,149.0 74.1,155.0 75.0,160.0 76.0,152.0 76.8,139.0 77.6,128.0 78.4,142.0 79.4,157.0 80.2,155.0 81.0,153.0 82.3,160.0 83.8,164.0 85.2,157.0 86.7,150.0 88.0,159.0 89.3,170.0 90.8,159.0 92.0,151.0 93.3,163.0 94.6,172.0 96.0,160.0 97.3,150.0 98.8,163.0 100.2,171.0 101.5,164.0 102.8,159.0 104.3,170.0 106.0,179.0 107.3,176.0 108.5,175.0 110.0,183.0 111.7,189.0 113.0,179.0 114.5,169.0 116.0,162.0 117.5,174.0 119.3,186.0 120.8,178.0 122.3,172.0 124.0,184.0 126.0,194.0 128.0,187.0 129.9,182.0 131.7,190.0 133.6,197.5 135.8,191.0 137.9,186.0 139.5,194.0 141.2,200.0 143.0,194.0 144.9,190.0 147.5,198.0 150.0,204.0 151.7,197.0 153.3,189.0 155.0,182.0 156.5,191.0 158.8,202.5 160.6,201.0 162.5,201.0 165.0,207.0 167.6,211.0 170.7,205.0 173.9,201.0 176.4,206.0 178.9,210.0 181.4,204.0 183.9,200.0 186.8,209.0 189.7,216.0 192.0,210.0 194.5,206.0 196.7,213.0 199.0,220.0 202.0,215.0 205.3,212.6 208.5,217.0 211.6,221.4 214.5,218.5 217.4,217.0 220.5,222.0 223.7,226.4 226.5,220.0 229.3,211.0 231.7,205.5 233.0,211.0 234.5,217.0 237.5,225.0 240.8,226.0 244.6,221.8 250.1,229.0 254.6,228.6 257.1,226.8 259.7,224.8 261.8,227.4 263.9,229.8 266.0,231.8 268.5,230.1 271.0,227.3 273.1,228.0 275.2,228.7 277.3,228.6 279.8,230.5 282.3,233.6 284.4,233.3 286.5,233.6 288.6,232.8 292.4,234.3 295.1,236.6 297.9,238.6 300.8,237.8 303.7,236.1 306.2,232.5 308.7,229.8 310.9,232.9 313.0,236.1 315.2,238.3 317.5,241.1 320.0,240.8 322.5,240.4 324.8,240.0 327.0,239.4 329.8,240.9 332.6,243.6 336.4,245.4 338.9,244.6 341.4,244.4 344.3,242.5 347.2,241.1 349.4,243.5 351.5,244.9 353.6,246.7 355.7,247.4 357.8,249.2 360.3,248.7 362.8,247.4 365.3,246.4 367.8,246.2 370.3,248.2 372.8,249.9 375.4,250.8 377.9,252.5 380.4,251.3 382.9,251.2 385.4,251.0 387.9,249.9 390.0,250.6 392.1,251.6 394.2,253.0 396.2,254.5 398.3,254.8 400.4,254.4 402.5,252.9 404.6,252.3 407.1,253.3 409.6,253.1 412.1,253.5 414.6,255.0 417.2,255.7 419.7,257.3 422.2,258.3 424.7,258.4 427.2,258.6 429.2,259.3 431.2,259.4 433.3,258.8 435.3,259.0 437.3,259.3 439.8,259.8 442.3,261.1 444.4,260.8 446.5,260.8 448.6,261.2 450.7,261.7 452.8,261.1 454.9,261.8 456.9,262.0 458.9,261.6 460.9,261.6 462.9,262.2 464.9,261.8 466.9,262.1 468.9,262.3 471.0,262.9 473.0,263.5 475.0,263.6 477.1,263.2 479.2,264.4 481.3,263.4 483.4,264.4 485.5,264.6 487.6,264.3 489.7,263.9 491.8,265.0 493.9,264.7 496.0,265.1 498.1,264.6 500.2,265.4 502.4,264.9 504.6,265.0 506.8,265.9 509.0,265.0 511.2,265.7 513.4,265.9 515.6,265.9 517.8,265.4 519.9,265.3 522.1,265.4 524.2,265.7 526.4,266.1 528.5,265.4 530.7,266.3 532.8,266.1 534.8,266.5 536.8,266.5 538.9,265.5 540.9,266.6 542.9,266.1 545.4,266.4 548.0,267.6 550.5,268.6 553.0,269.4 555.5,269.9 557.8,271.9 560.0,272.9 562.0,273.2 564.0,274.5 566.0,274.5 568.0,275.1 570.0,275.3 572.0,276.0" fill="none" stroke="#ffff00" stroke-width="1" stroke-linejoin="miter" shape-rendering="crispEdges"/>
<path d="M1 58.5 h1 v9 h0.8 v11 h-1.8 z" fill="#ffff00"/><rect x="0" y="58" width="1.1" height="303" fill="#ffff00"/>
<rect x="411.5" y="10.5" width="150" height="49" fill="#000058" stroke="#74766a" stroke-width="1"/>
<rect x="441" y="27" width="10" height="2" fill="#ff00ff"/>
<rect x="441" y="43" width="10" height="2" fill="#ffff00"/>
<text x="462" y="31" fill="#fff" font-family="Liberation Sans, sans-serif" font-size="11" textLength="60.6" lengthAdjust="spacingAndGlyphs">Left Channel</text>
<text x="462" y="47" fill="#fff" font-family="Liberation Sans, sans-serif" font-size="11" textLength="65.8" lengthAdjust="spacingAndGlyphs">Right Channel</text>
</svg>
</div>
</body></html>
